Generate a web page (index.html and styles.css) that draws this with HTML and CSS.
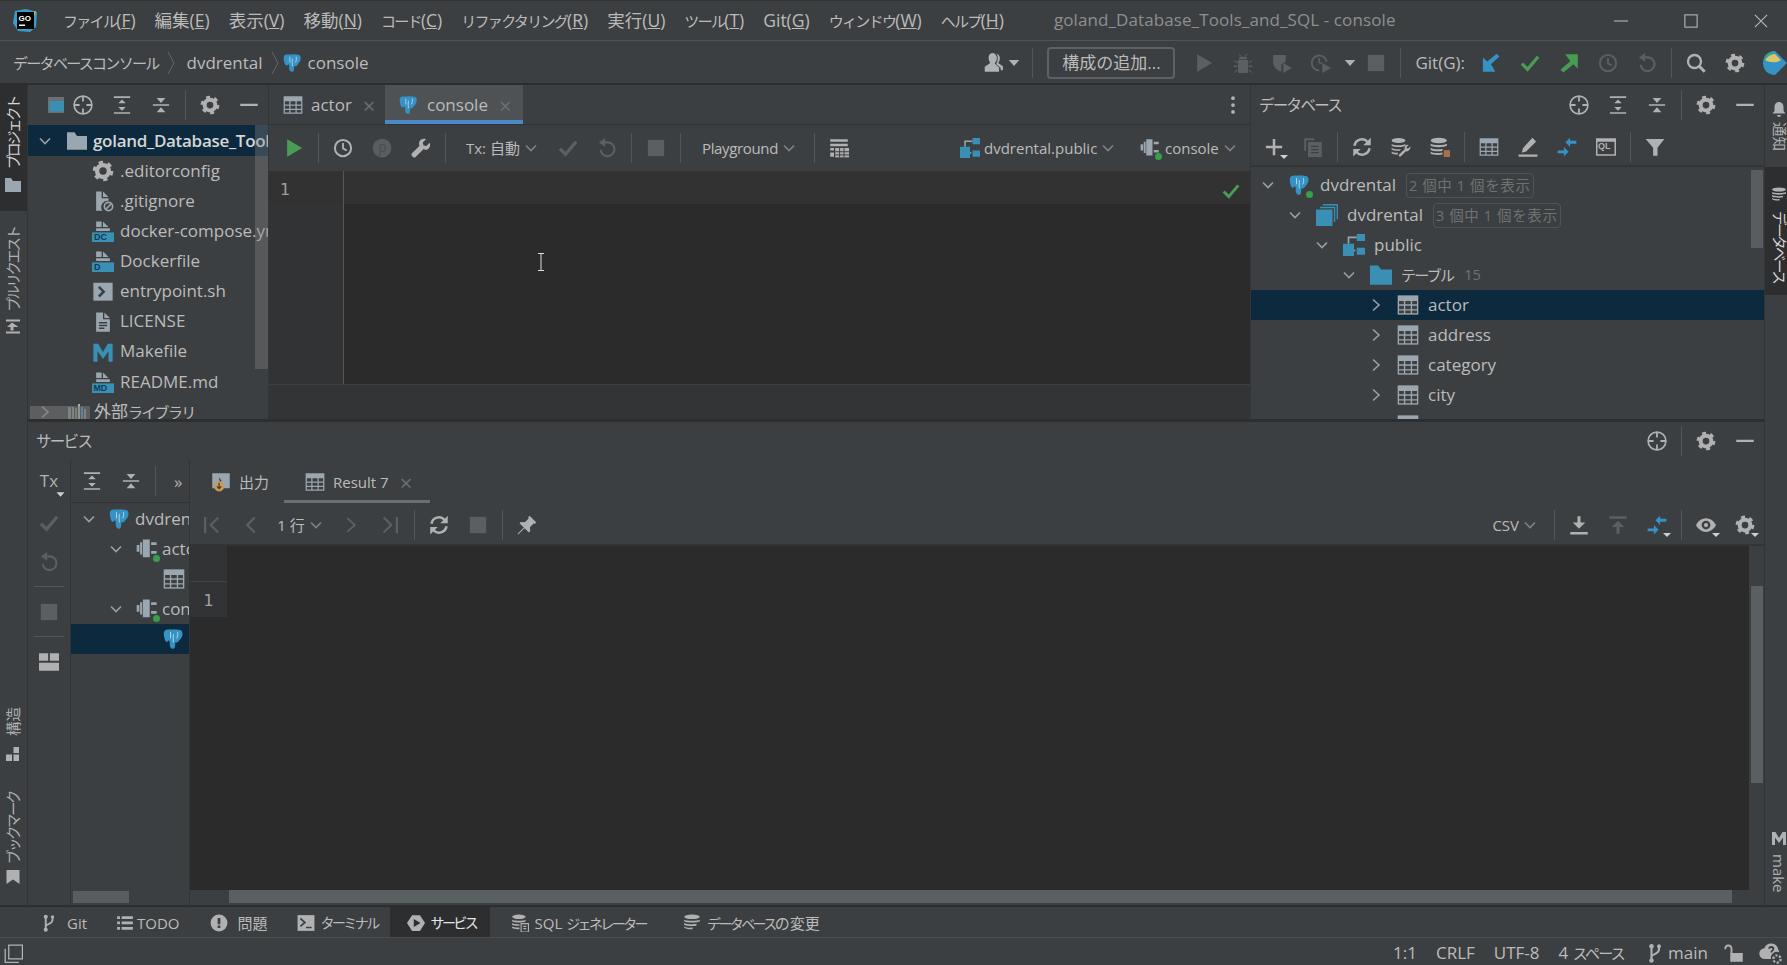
FILE: index.html
```html
<!DOCTYPE html>
<html lang="ja">
<head>
<meta charset="utf-8">
<title>goland_Database_Tools_and_SQL - console</title>
<link rel="stylesheet" href="styles.css">
</head>
<body>
<svg class="defs" xmlns="http://www.w3.org/2000/svg">
  <symbol id="pg" viewBox="0 0 16 16"><path fill="#3592c4" d="M2.600 1.200C1 1.400.3 2.900.6 5c.3 2.200 1.100 5 2.100 5 .6 0 1.100-.6 1.600-1.100.3.500.6.900.6 1.700 0 1.500-.1 2.500.6 3.500.8 1.100 2.400 1.300 3 .2.500-.9.300-2.600.4-3.700.9.100 1.800 0 2.300-.7.700-1.200 2.800-2.500 3-5.300.1-1.800-.6-3.300-2.300-3.200-.8-.3-1.800-.5-2.700-.2-.7-.3-1.300-.3-2 0C6.300 1.200 4 1 2.600 1.200z"/><path fill="none" stroke="#cfe4f0" stroke-width=".6" d="M5.500 3v4.500M10.500 3c.4 1.500.2 3-.5 4.500M7.600 4.500c-.3 2-.3 4.500 0 6"/></symbol>
  <symbol id="table" viewBox="0 0 16 16"><rect x="0.500" y="1" width="15" height="14" fill="#9aa7b0"/><path fill="#3c3f41" d="M1.500 5h3.500v2.500H1.500zM6 5h4v2.500H6zM11 5h3.500v2.500H11zM1.500 8.500h3.500V11H1.500zM6 8.500h4V11H6zM11 8.500h3.500V11H11zM1.500 12h3.500v2H1.500zM6 12h4v2H6zM11 12h3.500v2H11z"/></symbol>
  <symbol id="target" viewBox="0.700 0.700 14.600 14.600"><circle cx="8" cy="8" r="6.500" fill="none" stroke="currentColor" stroke-width="1.200"/><path stroke="currentColor" stroke-width="1.300" d="M8 1.500v4M8 10.500v4M1.500 8h4M10.500 8h4"/></symbol>
  <symbol id="expand" viewBox="0 0 16 16"><path fill="currentColor" d="M1.500 1h13v1.300h-13zM1.500 13.700h13V15h-13zM8 3.500l3 3H5zM8 12.500l-3-3h6z"/></symbol>
  <symbol id="collapse" viewBox="0 0 16 16"><path fill="currentColor" d="M1.500 7.300h13v1.300h-13zM8 6.300l-3.500-4h7zM8 9.700l3.500 4h-7z"/></symbol>
  <symbol id="gear" viewBox="0 0 16 16"><circle cx="8" cy="8" r="4.300" fill="none" stroke="currentColor" stroke-width="3.200"/><circle cx="8" cy="8" r="6.300" fill="none" stroke="currentColor" stroke-width="2.400" stroke-dasharray="3.100 3.500"/></symbol>
  <symbol id="minus" viewBox="0 0 16 16"><rect x="1" y="7" width="14" height="1.800" fill="currentColor"/></symbol>
  <symbol id="clock" viewBox="0 0 16 16"><circle cx="8" cy="8" r="6.500" fill="none" stroke="currentColor" stroke-width="1.600"/><path fill="none" stroke="currentColor" stroke-width="1.500" d="M8 4v4.300l3 1.700"/></symbol>
  <symbol id="play" viewBox="0 0 16 16"><path fill="currentColor" d="M2.500 1l12 7-12 7z"/></symbol>
  <symbol id="check" viewBox="0 0 16 16"><path fill="none" stroke="currentColor" stroke-width="2.600" d="M1.500 8.500l4.500 4.500 8.500-10"/></symbol>
  <symbol id="undo" viewBox="0 0 16 16"><path fill="none" stroke="currentColor" stroke-width="1.700" d="M4 3.500h4.500a5.500 5.500 0 1 1-5.500 6"/><path fill="currentColor" d="M6.500 0v7L1.500 3.500z"/></symbol>
  <symbol id="stop" viewBox="0 0 16 16"><rect x="1.500" y="1.500" width="13" height="13" fill="currentColor"/></symbol>
  <symbol id="wrench" viewBox="0 0 16 16"><path fill="currentColor" d="M15 3.800l-2.700 2.600-2.300-.5-.6-2.300L12 1c-2-.8-4.300-.1-5.200 1.600-.6 1.200-.5 2.500 0 3.500L.8 12.200c-.6.600-.6 1.500 0 2.100l.8.800c.6.600 1.500.6 2.100 0l6.200-6.100c1.100.5 2.400.5 3.500-.1C15 8 15.800 5.800 15 3.800z"/></symbol>
  <symbol id="down" viewBox="0 0 16 16"><path fill="none" stroke="currentColor" stroke-width="1.600" d="M3 5.500l5 5 5-5"/></symbol>
  <symbol id="right" viewBox="0 0 16 16"><path fill="none" stroke="currentColor" stroke-width="1.600" d="M5 2.500l6 5.500-6 5.500"/></symbol>
  <symbol id="left" viewBox="0 0 16 16"><path fill="none" stroke="currentColor" stroke-width="1.800" d="M11 2l-6 6 6 6"/></symbol>
  <symbol id="first" viewBox="0 0 16 16"><path fill="none" stroke="currentColor" stroke-width="1.800" d="M13 2L7 8l6 6M2.500 1.500v13"/></symbol>
  <symbol id="last" viewBox="0 0 16 16"><path fill="none" stroke="currentColor" stroke-width="1.800" d="M3 2l6 6-6 6M13.500 1.500v13"/></symbol>
  <symbol id="caret" viewBox="0 0 16 16"><path fill="currentColor" d="M1 4h14l-7 8z"/></symbol>
  <symbol id="schema" viewBox="0 0 16 16"><path fill="none" stroke="#9aa7b0" stroke-width="1.200" d="M4 7V2.500h6M9 12h-2"/><path fill="#3a8fb5" d="M10 0h6v5h-6zM0 7h8v9H0zM10 10h6v5h-6z"/></symbol>
  <symbol id="dbstack" viewBox="0 0 16 16"><path fill="none" stroke="#3a8fb5" stroke-width="1" d="M5 .5h10.500V11M3 2.500h10.500V13"/><rect x="0" y="4" width="12" height="12" fill="#3a8fb5"/></symbol>
  <symbol id="folder" viewBox="0 0 16 16"><path fill="#3a8fb5" d="M0 1h6l2 3h8v11H0z"/></symbol>
  <symbol id="gfolder" viewBox="0 0 16 16"><path fill="#9aa7b0" d="M0 1h6l2 3h8v11H0z"/></symbol>
  <symbol id="plug" viewBox="0 0 16 16"><path fill="#9aa7b0" d="M5 1h5v13H5zM3 3h1.500v9H3zM.5 5h2v5h-2zM11 3h4v2h-4zM11 9.500h4v2h-4z"/></symbol>
  <symbol id="dot" viewBox="0 0 4 4"><circle cx="2" cy="2" r="2" fill="#389e4a"/></symbol>
  <symbol id="doc" viewBox="0 0 16 16"><path fill="#9aa7b0" d="M3 1h5v5h5v9H3zM9 1l4 4H9z"/><path stroke="#3c3f41" d="M5 8.500h6M5 10.500h6M5 12.500h4"/></symbol>
  <symbol id="docblank" viewBox="0 0 16 16"><path fill="#9aa7b0" d="M3 1h4v4H3zM8 1l4 4H8zM3 6h10v2H3z"/><rect y="9" width="16" height="7" fill="#3a8fb5"/></symbol>
  <symbol id="nogit" viewBox="0 0 16 16"><path fill="#9aa7b0" d="M3 1h4v5h5v2a4.500 4.500 0 0 0-4.500 7H3zM8 1l4 4H8z"/><circle cx="12" cy="12" r="3" fill="none" stroke="#9aa7b0" stroke-width="1.200"/><path stroke="#9aa7b0" stroke-width="1.100" d="M14 10l-4 4"/></symbol>
  <symbol id="shell" viewBox="0 0 16 16"><rect x="1" y="2" width="14" height="13" fill="#9aa7b0"/><path fill="none" stroke="#3c3f41" stroke-width="1.800" d="M5 5l3.500 3.500L5 12"/></symbol>
  <symbol id="make" viewBox="0 0 16 16"><path fill="currentColor" d="M1 2h3.500L8 8l3.500-6H15v13h-3V7.500L8 13 4 7.500V15H1z"/></symbol>
  <symbol id="user" viewBox="0 0 20 20"><path fill="currentColor" d="M9.500 1C7 1 6 3 6 5.500S7 9 7.500 10l-5 3.500V18h13v-4l-4-3.500c1-1 2-3 2-5S12 1 9.500 1z"/><path fill="currentColor" d="M13 1.500c2 .3 3.200 1.800 3.200 4s-.7 3.500-1.500 4.500L19 13v3.500h-2v-2l-4.200-3.500c1-1.500 1.500-3.500 1.500-5.500s-.5-3-1.300-4.500z"/></symbol>
  <symbol id="bug" viewBox="0 0 16 16"><path fill="currentColor" d="M5 3h6v2H5zM4 5.500h8V14a3 3 0 0 1-8 0zM1 6l2.500 1v1L1 7zM15 6l-2.500 1v1L15 7zM.5 10h3v1.200h-3zM12.500 10h3v1.200h-3zM1 15l2.500-2v1L1.500 16zM15 15l-2.500-2v1l2 2zM5 .5l2 2H6L4.500 1zM11 .5L9 2.500h1L11.500 1z"/></symbol>
  <symbol id="shieldrun" viewBox="0 0 16 16"><path fill="currentColor" d="M1 1.500h10v5L7.500 9v6C3 13.500 1 11 1 7z"/><path fill="currentColor" d="M9 8l7 4-7 4z"/></symbol>
  <symbol id="clockrun" viewBox="0 0 16 16"><path fill="none" stroke="currentColor" stroke-width="1.500" d="M6.500 14A6 6 0 1 1 12.500 7"/><path fill="none" stroke="currentColor" stroke-width="1.300" d="M6.500 4v3.500l2 1"/><path fill="currentColor" d="M9 8l7 4-7 4z"/></symbol>
  <symbol id="arrowin" viewBox="0 0 16 16"><path fill="#3592c4" d="M1.500 15V3.500l3.500 3.200L12.500.5l2.200 2.300L8 9l3.500 6z"/></symbol>
  <symbol id="arrowout" viewBox="0 0 16 16"><path fill="#499c54" d="M15 1v11.500L11.500 9 3.500 15.500 1.200 13.300 9 6.500 5 1z"/></symbol>
  <symbol id="search" viewBox="0 0 16 16"><circle cx="6.800" cy="6.800" r="5.200" fill="none" stroke="currentColor" stroke-width="1.900"/><path stroke="currentColor" stroke-width="2.300" d="M10.500 10.500l4.500 4.500"/></symbol>
  <symbol id="plus" viewBox="0 0 16 16"><path fill="currentColor" d="M7 1.500h2V7h5.500v2H9v5.500H7V9H1.500V7H7z"/></symbol>
  <symbol id="copy" viewBox="0 0 16 16"><path fill="currentColor" d="M1 1h8v1.500H2.500V11H1z"/><path fill="currentColor" d="M4 4h11v12H4z"/><path stroke="#3c3f41" d="M6.500 7.500h6M6.500 10h6M6.500 12.500h6"/></symbol>
  <symbol id="refresh" viewBox="0 0 16 16"><path fill="none" stroke="currentColor" stroke-width="2" d="M2 7a6 6 0 0 1 10.500-3M14 9a6 6 0 0 1-10.500 3"/><path fill="currentColor" d="M15 .5V6.500H9zM1 15.500V9.500H7z"/></symbol>
  <symbol id="dbtools" viewBox="0 0 16 16"><ellipse cx="6" cy="2.800" rx="5.500" ry="2" fill="currentColor"/><path fill="currentColor" d="M.5 5.500c1.500 1.400 9.500 1.400 11 0v1.500c-1.500 1.400-9.500 1.400-11 0zM.5 8.500C2 10 7 10 8 9.500L7 11c-3 .3-5.500-.2-6.500-1zM.5 11.500c1 .8 3 1.200 5 1V14c-2 .1-4-.2-5-1z"/><path fill="currentColor" d="M15.500 7.500l-2 1.800-1.200-1.200 1.800-1.800c-1.500-.5-3 .4-3.200 2 0 .5 0 1 .2 1.300L6.500 14c-.5.500-.4 1 0 1.400s1 .4 1.400 0l4-4c1.800.6 4.200-1.500 3.600-3.900z"/></symbol>
  <symbol id="db" viewBox="0 0 16 16"><ellipse cx="7" cy="2.800" rx="6.500" ry="2.200" fill="currentColor"/><path fill="currentColor" d="M.5 5.300c1.500 1.500 11.500 1.500 13 0V7c-1.500 1.500-11.500 1.500-13 0zM.5 8.500c1.500 1.500 8 1.500 9.500.8V11c-2 .8-8 .5-9.500-.8zM.5 11.500c1.500 1.400 6 1.500 9.500.8V14c-3 .6-8 .5-9.500-.8z"/><rect x="11" y="10.500" width="5.500" height="5.500" fill="#a8704a"/></symbol>
  <symbol id="pen" viewBox="0 0 16 16"><path fill="currentColor" d="M11.500.5l3 3L6.500 11.500 3 12.500l1-3.500zM.5 14h15v1.800H.5z"/></symbol>
  <symbol id="sync" viewBox="0 0 16 16"><path fill="#3592c4" d="M15.500 3H10.500V.5L6.800 4.200 10.500 8V5.300h5zM.5 13H5.500v2.500L9.200 11.800 5.500 8v2.700h-5z"/></symbol>
  <symbol id="ql" viewBox="0 0 16 16"><path fill="currentColor" d="M0 1h16v14H0z"/><path fill="#3c3f41" d="M1.200 3.800h13.600v10H1.200z"/></symbol>
  <symbol id="filter" viewBox="0 0 16 16"><path fill="currentColor" d="M.5 1.500h15L10 8.500V15H6.500V8.500z"/></symbol>
  <symbol id="pin" viewBox="0 0 16 16"><path fill="currentColor" d="M10 .5L15.500 6l-1.200 1-1-.3-3 3 .3 3.300-1 1L6 10.500 1 15.500l-.5-.5L5.500 10 2 6.500l1-1 3.300.3 3-3L9 1.800z"/></symbol>
  <symbol id="dl" viewBox="0 0 16 16"><path fill="currentColor" d="M6.800 1h2.400v5H13l-5 5-5-5h3.800zM1 13.500h14V15.500H1z"/></symbol>
  <symbol id="ul" viewBox="0 0 16 16"><path fill="currentColor" d="M1 1h14v2H1zM8 4.500l5 5H9.200V15H6.800V9.500H3z"/></symbol>
  <symbol id="eye" viewBox="0 0 16 16"><path fill="currentColor" fill-rule="evenodd" d="M8 2.500C4 2.500 1.200 5.500 0 8c1.200 2.500 4 5.500 8 5.500s6.800-3 8-5.500c-1.200-2.500-4-5.500-8-5.500zM8 4.500a3.500 3.500 0 1 1 0 7 3.500 3.500 0 0 1 0-7z"/><circle cx="8" cy="8" r="1.700" fill="currentColor"/></symbol>
  <symbol id="layout" viewBox="0 0 16 16"><path fill="currentColor" d="M0 1h7.300v6H0zM8.700 1H16v6H8.700zM0 8.500h16V15H0z"/></symbol>
  <symbol id="grid" viewBox="0 0 16 16"><path fill="currentColor" d="M1 1h14v2H1zM1 4.500h14v2H1zM1 8h3v2H1zM1 11.500h3V15H1z"/><path fill="currentColor" d="M5 8h11v7.500H5z"/><path stroke="#3c3f41" stroke-width=".8" d="M5 11h11M5 13.500h11M8.500 8v7.500M12 8v7.500"/></symbol>
  <symbol id="selin" viewBox="0 0 16 16"><rect x="0" y="0" width="16" height="16" fill="#6c7072"/><rect x="1.500" y="4" width="14.500" height="10.500" fill="#3a8fb5"/></symbol>
  <symbol id="branch" viewBox="0 0 16 16"><path fill="none" stroke="currentColor" stroke-width="1.700" d="M6 3v11M6 11c0-2 6-2 6-6V3"/><circle cx="6" cy="2.500" r="1.800" fill="currentColor"/><circle cx="6" cy="14" r="1.800" fill="currentColor"/><circle cx="12" cy="2.500" r="1.500" fill="currentColor"/></symbol>
  <symbol id="list" viewBox="0 0 16 16"><path fill="currentColor" d="M1 2h2.500v2.500H1zM5 2h10v2.500H5zM1 6.700h2.500v2.500H1zM5 6.700h10v2.500H5zM1 11.500h2.500V14H1zM5 11.500h10V14H5z"/></symbol>
  <symbol id="warn" viewBox="0 0 16 16"><circle cx="8" cy="8" r="7.500" fill="currentColor"/><path fill="#3c3f41" d="M6.800 3.500h2.400v5.500H6.800zM6.800 10.200h2.400v2.300H6.800z"/></symbol>
  <symbol id="term" viewBox="0 0 16 16"><rect x="0.500" y="1" width="15" height="14" fill="currentColor"/><path fill="none" stroke="#3c3f41" stroke-width="1.500" d="M3 4l4 3.500L3 11M8 12h5"/></symbol>
  <symbol id="svc" viewBox="0 0 16 16"><path fill="currentColor" d="M4.500 1h7L16 8l-4.500 7h-7L0 8z"/><path fill="#2d2e30" d="M6 4.500L12 8l-6 3.500z"/></symbol>
  <symbol id="sqlgen" viewBox="0 0 16 16"><ellipse cx="7" cy="2.500" rx="6" ry="2" fill="currentColor"/><path fill="currentColor" d="M1 5c1.500 1.300 10.500 1.300 12 0v1.500C11.500 8 2.500 8 1 6.500zM1 8c1 .9 4 1.200 6.500 1v1.500C5 10.700 2 10.300 1 9.500zM1 11c1 .8 4 1.200 6.500 1v1.500C5 13.700 2 13.300 1 12.500z"/><path fill="none" stroke="currentColor" d="M9 8.500h6.500V16H9zM11 11h2.500M11 13h2.500"/></symbol>
  <symbol id="dbchg" viewBox="0 0 16 16"><ellipse cx="8" cy="2.500" rx="7" ry="2" fill="currentColor"/><path fill="currentColor" d="M1 5c1.500 1.300 12.500 1.300 14 0v1.500C13.500 8 2.500 8 1 6.500zM1 8c1.500 1.300 9 1.400 11 .7v1.500C10 11 2.500 10.800 1 9.500zM1 11c1 .9 5 1.400 7.500 1v1.500C6 13.800 2 13.300 1 12z"/></symbol>
  <symbol id="outp" viewBox="0 0 16 16"><rect x="1" y="1" width="14" height="12" fill="#9aa7b0"/><path fill="#3c3f41" d="M6 4l2.500 3-1.300 1z"/><circle cx="6.500" cy="11.500" r="4" fill="#c99a52"/><path stroke="#3c3f41" fill="none" d="M6.500 8.500V13M4.700 11.500l1.800 1.800 1.800-1.800"/></symbol>
  <symbol id="bell" viewBox="0 0 16 16"><path fill="currentColor" d="M8 1c3 0 4.500 2.500 4.500 5v4l2 2.500h-13l2-2.500V6C3.500 3.500 5 1 8 1zM6 14h4a2 2 0 0 1-4 0z"/></symbol>
  <symbol id="pullreq" viewBox="0 0 16 16"><path fill="currentColor" d="M1 1h14v2H1zM1 13h14v2H1zM7 4L2 8.500h3.500V12h3V8.500h5z"/></symbol>
  <symbol id="struct" viewBox="0 0 16 16"><path fill="currentColor" d="M8.500 1H14v6H8.500zM1 8.500h6V15H1zM8.500 8.500H14V15H8.500z"/></symbol>
  <symbol id="bookmark" viewBox="0 0 16 16"><path fill="currentColor" d="M1.500 1h13v14L8 10.500 1.500 15z"/></symbol>
  <symbol id="lock" viewBox="0 0 16 16"><path fill="none" stroke="currentColor" stroke-width="1.500" d="M1 5c0-4 5-4 5 0v3"/><rect x="5" y="8" width="10" height="7" fill="currentColor"/></symbol>
  <symbol id="inspect" viewBox="0 0 20 20"><path fill="currentColor" d="M5 15a4.500 4.500 0 0 1-.5-9A6 6 0 0 1 16 7a4 4 0 0 1 1 2.500A5 5 0 0 0 10 15z"/><path fill="none" stroke="#3c3f41" stroke-width="1.500" d="M8.500 6.500c0-2 3.500-2 3.500 0 0 1.500-1.800 1.500-1.800 3"/><circle cx="15" cy="15" r="3" fill="none" stroke="currentColor" stroke-width="2" stroke-dasharray="1.800 1.300"/></symbol>
  <symbol id="frame" viewBox="0 0 16 16"><path fill="none" stroke="currentColor" stroke-width="1.100" d="M4 1h11.500v11.500H4zM1 4v11.500h11.500"/></symbol>
</svg>

<div class="app">
  <header class="titlebar">
    <svg class="logo" viewBox="0 0 26 24"><path fill="#3a9cc9" d="M3 2L14 0l11 3-1 15-6 5-12-1-5-8z"/><path fill="#b5d33d" d="M21 3l3-1-2 5z"/><rect x="5" y="3" width="17" height="17" fill="#000"/><text x="6.500" y="12" class="logotext">GO</text><rect x="7" y="15.500" width="6" height="1.500" fill="#fff"/></svg>
    <nav class="menu">
      <span><span class="k">ファイル</span>(<u>F</u>)</span>
      <span>編集(<u>E</u>)</span>
      <span>表示(<u>V</u>)</span>
      <span>移動(<u>N</u>)</span>
      <span><span class="k">コード</span>(<u>C</u>)</span>
      <span><span class="k">リファクタリング</span>(<u>R</u>)</span>
      <span>実行(<u>U</u>)</span>
      <span><span class="k">ツール</span>(<u>T</u>)</span>
      <span>Git(<u>G</u>)</span>
      <span><span class="k">ウィンドウ</span>(<u>W</u>)</span>
      <span><span class="k">ヘルプ</span>(<u>H</u>)</span>
    </nav>
    <div class="wintitle">goland_Database_Tools_and_SQL - console</div>
    <div class="winbtns">
      <svg class="wb" viewBox="0 0 16 16"><path stroke="#bbb" stroke-width="1.200" d="M0 8h16"/></svg>
      <svg class="wb" viewBox="0 0 16 16"><rect x="1" y="1" width="14" height="14" fill="none" stroke="#bbb" stroke-width="1.200"/></svg>
      <svg class="wb" viewBox="0 0 16 16"><path stroke="#bbb" stroke-width="1.200" d="M1 1l14 14M15 1L1 15"/></svg>
    </div>
  </header>

  <div class="navbar">
    <div class="crumbs">
      <span><span class="k">データベースコンソール</span></span>
      <svg class="crumbsep" viewBox="0 0 8 24"><path fill="none" stroke="#666" d="M1 1l6 11-6 11"/></svg>
      <span>dvdrental</span>
      <svg class="crumbsep" viewBox="0 0 8 24"><path fill="none" stroke="#666" d="M1 1l6 11-6 11"/></svg>
      <svg class="ic"><use href="#pg"/></svg>
      <span>console</span>
    </div>
    <div class="navtools">
      <svg class="ic user"><use href="#user"/></svg>
      <svg class="ic tiny"><use href="#caret"/></svg>
      <i class="sep first"></i>
      <button class="cfg">構成の追加...</button>
      <span class="btn dim"><svg class="ic"><use href="#play"/></svg></span>
      <span class="btn dim"><svg class="ic"><use href="#bug"/></svg></span>
      <span class="btn dim"><svg class="ic"><use href="#shieldrun"/></svg></span>
      <span class="btn dim"><svg class="ic"><use href="#clockrun"/></svg></span>
      <svg class="ic tiny"><use href="#caret"/></svg>
      <span class="btn dim narrow"><svg class="ic"><use href="#stop"/></svg></span>
      <i class="sep"></i>
      <span class="gitlabel">Git(G):</span>
      <span class="btn"><svg class="ic"><use href="#arrowin"/></svg></span>
      <span class="btn green"><svg class="ic"><use href="#check"/></svg></span>
      <span class="btn"><svg class="ic"><use href="#arrowout"/></svg></span>
      <span class="btn dim"><svg class="ic"><use href="#clock"/></svg></span>
      <span class="btn dim"><svg class="ic"><use href="#undo"/></svg></span>
      <i class="sep"></i>
      <span class="btn"><svg class="ic"><use href="#search"/></svg></span>
      <span class="btn"><svg class="ic"><use href="#gear"/></svg></span>
      <svg class="toolbox" viewBox="0 0 24 26"><path fill="#3592c4" d="M0 13C0 6 5 1 12 1l12 12-12 12C5 25 0 20 0 13z"/><path fill="#d8c66d" d="M2 10c2-4 6-6 10-6l6 6c-4 3-11 3-16 0z"/><path fill="#37a58c" d="M2 6c3-3 6-4 10-5l-2 3C7 5 4 7 2 10z"/></svg>
    </div>
  </div>

  <div class="main">
    <aside class="stripe left">
      <div class="sitem active proj"><svg class="sic"><use href="#gfolder"/></svg><span class="stext">プロジェクト</span></div>
      <div class="sitem pr"><svg class="sic"><use href="#pullreq"/></svg><span class="stext">プルリクエスト</span></div>
      <div class="sitem struct"><svg class="sic"><use href="#struct"/></svg><span class="stext kanji">構造</span></div>
      <div class="sitem marks"><svg class="sic"><use href="#bookmark"/></svg><span class="stext">ブックマーク</span></div>
    </aside>

    <div class="center">
      <div class="top">
        <section class="project">
          <div class="phead">
            <span class="selin"><svg class="ic"><use href="#selin"/></svg></span>
            <span class="btn"><svg class="ic"><use href="#target"/></svg></span>
            <span class="btn"><svg class="ic"><use href="#expand"/></svg></span>
            <span class="btn"><svg class="ic"><use href="#collapse"/></svg></span>
            <i class="sep"></i>
            <span class="btn"><svg class="ic"><use href="#gear"/></svg></span>
            <span class="btn"><svg class="ic"><use href="#minus"/></svg></span>
          </div>
          <div class="ptree">
            <div class="frow sel"><svg class="chev"><use href="#down"/></svg><svg class="ic fold"><use href="#gfolder"/></svg><b>goland_Database_Tools_and_SQL</b></div>
            <div class="frow file"><svg class="ic gear"><use href="#gear"/></svg><span>.editorconfig</span></div>
            <div class="frow file"><svg class="ic"><use href="#nogit"/></svg><span>.gitignore</span></div>
            <div class="frow file"><svg class="ic" viewBox="0 0 16 16"><use href="#docblank"/><text x="1.500" y="14.800" class="badgetext">DC</text></svg><span>docker-compose.yml</span></div>
            <div class="frow file"><svg class="ic" viewBox="0 0 16 16"><use href="#docblank"/><text x="1.500" y="14.800" class="badgetext">D</text></svg><span>Dockerfile</span></div>
            <div class="frow file"><svg class="ic"><use href="#shell"/></svg><span>entrypoint.sh</span></div>
            <div class="frow file"><svg class="ic"><use href="#doc"/></svg><span>LICENSE</span></div>
            <div class="frow file"><svg class="ic teal"><use href="#make"/></svg><span>Makefile</span></div>
            <div class="frow file"><svg class="ic" viewBox="0 0 16 16"><use href="#docblank"/><text x="1" y="14.800" class="badgetext">MD</text></svg><span>README.md</span></div>
            <div class="frow ext"><svg class="chev"><use href="#right"/></svg>
              <svg class="ic fold" viewBox="0 0 20 20"><path fill="#8a8d8f" d="M1 5h3v13H1zM5 5h2v13H5z"/><path fill="#6a9a5a" d="M8 6h2v12H8z"/><path fill="#aab0b5" d="M11 2h2v16h-2z"/><path fill="#3592c4" d="M14 5h2v13h-2z"/><path fill="#8a8d8f" d="M17 7h2v11h-2z"/></svg>
              <span>外部<span class="k">ライブラリ</span></span></div>
          </div>
          <i class="vthumb pthumb"></i>
          <i class="hthumb"></i>
        </section>

        <section class="editor">
          <div class="tabs">
            <div class="tab"><svg class="ic"><use href="#table"/></svg><span>actor</span><em>×</em></div>
            <div class="tab on"><svg class="ic"><use href="#pg"/></svg><span>console</span><em>×</em></div>
            <svg class="ic dots" viewBox="0 0 16 16"><circle cx="8" cy="2.500" r="1.500" fill="#afb1b3"/><circle cx="8" cy="8" r="1.500" fill="#afb1b3"/><circle cx="8" cy="13.500" r="1.500" fill="#afb1b3"/></svg>
          </div>
          <div class="etool">
            <span class="btn green"><svg class="ic"><use href="#play"/></svg></span>
            <i class="sep"></i>
            <span class="btn"><svg class="ic"><use href="#clock"/></svg></span>
            <span class="btn"><svg class="ic pcirc" viewBox="0 0 16 16"><circle cx="8" cy="8" r="7.500" fill="#5a5d5f"/><text x="5" y="11" class="ptext">p</text></svg></span>
            <span class="btn"><svg class="ic"><use href="#wrench"/></svg></span>
            <i class="sep"></i>
            <span class="combo tx">Tx: 自動<svg class="chv"><use href="#down"/></svg></span>
            <span class="btn dim"><svg class="ic"><use href="#check"/></svg></span>
            <span class="btn dim"><svg class="ic"><use href="#undo"/></svg></span>
            <i class="sep"></i>
            <span class="btn dim"><svg class="ic"><use href="#stop"/></svg></span>
            <i class="sep"></i>
            <span class="combo play">Playground<svg class="chv"><use href="#down"/></svg></span>
            <i class="sep"></i>
            <span class="btn"><svg class="ic"><use href="#grid"/></svg></span>
            <span class="combo schema"><svg class="ic"><use href="#schema"/></svg>dvdrental.public<svg class="chv"><use href="#down"/></svg></span>
            <span class="combo cons"><span class="plug"><svg class="ic"><use href="#plug"/></svg><svg class="gdot"><use href="#dot"/></svg></span>console<svg class="chv"><use href="#down"/></svg></span>
          </div>
          <div class="ebody">
            <div class="gutter"><div class="gline">1</div></div>
            <div class="code"><div class="caretrow"><svg class="ic okmark"><use href="#check"/></svg></div></div>
          </div>
          <div class="eband"></div>
          <svg class="ibeam" viewBox="0 0 8 18"><path fill="none" stroke="#ddd" d="M1 .5h6M4 .5v17M1 17.500h6"/></svg>
        </section>

        <section class="dbpanel">
          <div class="dhead">
            <span class="ptitle"><span class="k">データベース</span></span>
            <span class="right">
              <span class="btn"><svg class="ic"><use href="#target"/></svg></span>
              <span class="btn"><svg class="ic"><use href="#expand"/></svg></span>
              <span class="btn"><svg class="ic"><use href="#collapse"/></svg></span>
              <i class="sep"></i>
              <span class="btn"><svg class="ic"><use href="#gear"/></svg></span>
              <span class="btn"><svg class="ic"><use href="#minus"/></svg></span>
            </span>
          </div>
          <div class="dtool">
            <span class="btn corner"><svg class="ic"><use href="#plus"/></svg></span>
            <span class="btn dim"><svg class="ic"><use href="#copy"/></svg></span>
            <i class="sep"></i>
            <span class="btn"><svg class="ic"><use href="#refresh"/></svg></span>
            <span class="btn"><svg class="ic"><use href="#dbtools"/></svg></span>
            <span class="btn"><svg class="ic"><use href="#db"/></svg></span>
            <i class="sep"></i>
            <span class="btn"><svg class="ic"><use href="#table"/></svg></span>
            <span class="btn"><svg class="ic"><use href="#pen"/></svg></span>
            <span class="btn"><svg class="ic"><use href="#sync"/></svg></span>
            <span class="btn qlbtn"><svg class="ic"><use href="#ql"/></svg><span class="qltext">QL</span></span>
            <i class="sep"></i>
            <span class="btn"><svg class="ic"><use href="#filter"/></svg></span>
          </div>
          <div class="dtree">
            <div class="trow d0"><svg class="chev"><use href="#down"/></svg><span class="tic"><svg class="ic"><use href="#pg"/></svg><svg class="gdot"><use href="#dot"/></svg></span><span>dvdrental</span><span class="badge">2 個中 1 個を表示</span></div>
            <div class="trow d1"><svg class="chev"><use href="#down"/></svg><span class="tic"><svg class="ic"><use href="#dbstack"/></svg></span><span>dvdrental</span><span class="badge">3 個中 1 個を表示</span></div>
            <div class="trow d2"><svg class="chev"><use href="#down"/></svg><span class="tic"><svg class="ic"><use href="#schema"/></svg></span><span>public</span></div>
            <div class="trow d3"><svg class="chev"><use href="#down"/></svg><span class="tic"><svg class="ic"><use href="#folder"/></svg></span><span><span class="k">テーブル</span></span><span class="count">15</span></div>
            <div class="trow d4 sel"><svg class="chev"><use href="#right"/></svg><span class="tic"><svg class="ic"><use href="#table"/></svg></span><span>actor</span></div>
            <div class="trow d4"><svg class="chev"><use href="#right"/></svg><span class="tic"><svg class="ic"><use href="#table"/></svg></span><span>address</span></div>
            <div class="trow d4"><svg class="chev"><use href="#right"/></svg><span class="tic"><svg class="ic"><use href="#table"/></svg></span><span>category</span></div>
            <div class="trow d4"><svg class="chev"><use href="#right"/></svg><span class="tic"><svg class="ic"><use href="#table"/></svg></span><span>city</span></div>
            <div class="trow d4"><svg class="chev"><use href="#right"/></svg><span class="tic"><svg class="ic"><use href="#table"/></svg></span></div>
          </div>
          <i class="vthumb dthumb"></i>
        </section>
      </div>

      <section class="services">
        <div class="shead">
          <span class="ptitle"><span class="k">サービス</span></span>
          <span class="right">
            <span class="btn"><svg class="ic"><use href="#target"/></svg></span>
            <i class="sep"></i>
            <span class="btn"><svg class="ic"><use href="#gear"/></svg></span>
            <span class="btn"><svg class="ic"><use href="#minus"/></svg></span>
          </span>
        </div>
        <div class="sbody">
          <div class="stool">
            <span class="vbtn txb">Tx<svg class="tc"><use href="#caret"/></svg></span>
            <span class="vbtn dim"><svg class="ic"><use href="#check"/></svg></span>
            <span class="vbtn dim"><svg class="ic"><use href="#undo"/></svg></span>
            <i class="hsep"></i>
            <span class="vbtn dim"><svg class="ic"><use href="#stop"/></svg></span>
            <i class="hsep"></i>
            <span class="vbtn"><svg class="ic"><use href="#layout"/></svg></span>
          </div>
          <div class="stree">
            <div class="sttool">
              <span class="btn"><svg class="ic"><use href="#expand"/></svg></span>
              <span class="btn"><svg class="ic"><use href="#collapse"/></svg></span>
              <i class="sep"></i>
              <span class="more">»</span>
            </div>
            <div class="sttree">
              <div class="trow d0"><svg class="chev"><use href="#down"/></svg><span class="tic"><svg class="ic"><use href="#pg"/></svg></span><span class="tight">dvdrental</span></div>
              <div class="trow d1"><svg class="chev"><use href="#down"/></svg><span class="tic"><svg class="ic"><use href="#plug"/></svg><svg class="gdot"><use href="#dot"/></svg></span><span class="tight">actor</span></div>
              <div class="trow d2 leaf"><svg class="chev none"></svg><span class="tic"><svg class="ic"><use href="#table"/></svg></span></div>
              <div class="trow d1"><svg class="chev"><use href="#down"/></svg><span class="tic"><svg class="ic"><use href="#plug"/></svg><svg class="gdot"><use href="#dot"/></svg></span><span class="tight">console</span></div>
              <div class="trow d2 leaf sel"><svg class="chev none"></svg><span class="tic"><svg class="ic"><use href="#pg"/></svg></span></div>
            </div>
            <i class="treescroll"></i>
          </div>
          <div class="results">
            <div class="rtabs">
              <div class="rtab"><svg class="ic"><use href="#outp"/></svg><span>出力</span></div>
              <div class="rtab on"><svg class="ic"><use href="#table"/></svg><span>Result 7</span><em>×</em></div>
            </div>
            <div class="rtool">
              <span class="btn dim"><svg class="ic"><use href="#first"/></svg></span>
              <span class="btn dim"><svg class="ic"><use href="#left"/></svg></span>
              <span class="combo rows">1 行<svg class="chv"><use href="#down"/></svg></span>
              <span class="btn dim"><svg class="ic"><use href="#right"/></svg></span>
              <span class="btn dim"><svg class="ic"><use href="#last"/></svg></span>
              <i class="sep"></i>
              <span class="btn"><svg class="ic"><use href="#refresh"/></svg></span>
              <span class="btn dim"><svg class="ic"><use href="#stop"/></svg></span>
              <i class="sep"></i>
              <span class="btn"><svg class="ic"><use href="#pin"/></svg></span>
              <span class="right">
                <span class="combo csv">CSV<svg class="chv"><use href="#down"/></svg></span>
                <i class="sep"></i>
                <span class="btn"><svg class="ic"><use href="#dl"/></svg></span>
                <span class="btn dim"><svg class="ic"><use href="#ul"/></svg></span>
                <span class="btn corner"><svg class="ic"><use href="#sync"/></svg></span>
                <i class="sep"></i>
                <span class="btn corner"><svg class="ic"><use href="#eye"/></svg></span>
                <span class="btn corner"><svg class="ic"><use href="#gear"/></svg></span>
              </span>
            </div>
            <div class="gridwrap">
              <div class="gridarea">
                <div class="rowhead"><div class="rh0"></div><div class="rh1">1</div></div>
                <div class="vtrack"><i class="vthumb2"></i></div>
              </div>
              <div class="htrack"><i class="hthumb2"></i></div>
            </div>
          </div>
        </div>
      </section>
    </div>

    <aside class="stripe right">
      <div class="sitem notif"><svg class="sic"><use href="#bell"/></svg><span class="stext kanji">通知</span></div>
      <div class="sitem active dbs"><svg class="sic"><use href="#dbchg"/></svg><span class="stext">データベース</span></div>
      <div class="sitem mk"><svg class="sic"><use href="#make"/></svg><span class="stext kanji">make</span></div>
    </aside>
  </div>

  <div class="toolbar">
    <div class="tw"><svg class="ic"><use href="#branch"/></svg>Git</div>
    <div class="tw"><svg class="ic"><use href="#list"/></svg>TODO</div>
    <div class="tw"><svg class="ic"><use href="#warn"/></svg>問題</div>
    <div class="tw"><svg class="ic"><use href="#term"/></svg><span class="k">ターミナル</span></div>
    <div class="tw on"><svg class="ic"><use href="#svc"/></svg><span class="k">サービス</span></div>
    <div class="tw"><svg class="ic"><use href="#sqlgen"/></svg><span>SQL <span class="k">ジェネレーター</span></span></div>
    <div class="tw"><svg class="ic"><use href="#dbchg"/></svg><span><span class="k">データベース</span>の変更</span></div>
  </div>

  <footer class="status">
    <svg class="ic frame"><use href="#frame"/></svg>
    <div class="stat">
      <span>1:1</span><span>CRLF</span><span>UTF-8</span><span>4 <span class="k">スペース</span></span>
      <span class="gb"><svg class="ic"><use href="#branch"/></svg>main</span>
      <svg class="ic lockic"><use href="#lock"/></svg>
      <svg class="ic wide"><use href="#inspect"/></svg>
    </div>
  </footer>
</div>
</body>
</html>
```

FILE: styles.css
```css
* { box-sizing: border-box; }
html, body { margin: 0; height: 100%; background: #3c3f41; }
body { color: #bbbbbb; font: 17px/1.2 "Open Sans", "Noto Sans", "Noto Sans CJK JP", sans-serif; overflow: hidden; }
em { font-style: normal; }
.defs { display: none; }
.app { width: 1787px; height: 965px; display: flex; flex-direction: column; overflow: hidden; }
.k { font-size: 15px; letter-spacing: -1.700px; }
.ic { width: 20px; height: 20px; flex: none; color: #afb1b3; display: block; }
.tiny { width: 12px; height: 12px; }
.btn { width: 39px; height: 39px; display: flex; align-items: center; justify-content: center; flex: none; color: #afb1b3; position: relative; }
.btn .ic { color: inherit; }
.dim { color: #5c5f61; }
.green { color: #499c54; }
.sep { width: 1px; height: 30px; background: #515658; margin: 0 4.500px 0 4.500px; flex: none; display: block; }
.right { margin-left: auto; display: flex; align-items: center; }

/* title */
.titlebar { height: 41px; flex: none; display: flex; align-items: center; border-bottom: 1px solid #505355; border-top: 1px solid #333; }
.logo { width: 26px; height: 24px; margin-left: 12px; flex: none; }
.logotext { font: bold 8px "Liberation Sans", sans-serif; fill: #fff; }
.menu { display: flex; gap: 19px; margin-left: 25px; font-size: 17.500px; }
.wintitle { margin-left: 50px; color: #8c8f91; font-size: 17px; letter-spacing: .1px; }
.winbtns { margin-left: auto; display: flex; gap: 56px; margin-right: 19px; }
.wb { width: 14px; height: 14px; display: block; }

/* nav */
.navbar { height: 44px; flex: none; display: flex; align-items: center; border-bottom: 2px solid #2b2d2e; padding: 2px 0 0 13px; }
.crumbs { display: flex; align-items: center; }
.crumbs .ic { margin: 0 5px 0 9px; color: #3592c4; }
.crumbsep { width: 8px; height: 24px; margin: 0 12px 0 8px; flex: none; }
.crumbsep + .ic { margin-left: -8px; }
.navtools { margin-left: auto; display: flex; align-items: center; }
.user { width: 22px; height: 22px; }
.tiny { margin-left: 4px; color: #afb1b3; }
.sep.first { margin: 0 14px 0 12px; }
.cfg { width: 128px; height: 32px; background: none; border: 2px solid #5e6163; border-radius: 4px; color: #bbb; font: inherit; margin-right: 9px; padding: 0; white-space: nowrap; }
.btn.narrow { width: 39px; }
.gitlabel { margin: 0 6px 0 10px; }
.toolbox { width: 24px; height: 26px; flex: none; margin-left: 9px; }

.main { height: 820px; flex: none; display: flex; }

/* stripes */
.stripe { width: 28px; flex: none; display: flex; flex-direction: column; background: #3c3f41; border-right: 1px solid #323436; }
.stripe.right { width: 23px; border-right: 0; border-left: 1px solid #323436; overflow: hidden; }
.sitem { writing-mode: vertical-rl; display: flex; align-items: center; flex: none; font-size: 14.500px; color: #afb1b3; }
.stext { text-orientation: sideways; letter-spacing: -2.500px; white-space: nowrap; }
.stext.kanji { letter-spacing: 0; }
.sic { width: 16px; height: 16px; flex: none; color: #afb1b3; writing-mode: horizontal-tb; }
.stripe.left .sitem { transform: rotate(180deg); }
.stripe.left .sic { transform: rotate(180deg); }
.sitem.active { background: #2d2e30; color: #d5d5d5; }
.proj { height: 126px; padding-top: 18px; gap: 7.500px; }
.pr { margin-top: 12px; padding: 5px 0; gap: 6.500px; }
.struct { margin-top: auto; padding: 5px 0; gap: 10px; }
.marks { margin-top: 20px; margin-bottom: 15px; padding: 5px 0; gap: 5px; }
.stripe.right .sitem { padding-left: 6px; }
.notif { height: 82px; padding-top: 16px; gap: 5px; }
.dbs { height: 128px; padding-top: 20px; gap: 8px; }
.mk { margin-top: auto; margin-bottom: 12px; gap: 8px; font-size: 15px; }

/* center */
.center { flex: 1; min-width: 0; display: flex; flex-direction: column; }
.top { height: 337px; flex: none; display: flex; border-bottom: 3px solid #2d2e30; }
.project { width: 240px; flex: none; position: relative; overflow: hidden; }
.phead { height: 40px; display: flex; align-items: center; }
.selin { width: 34px; margin-left: 17px; display: flex; }
.selin .ic { width: 16px; height: 16px; margin-left: 3px; }
.phead .btn:nth-of-type(2) { margin-left: -13px; }
.ptree { padding-top: 1px; }
.frow { height: 30.100px; display: flex; align-items: center; white-space: nowrap; }
.frow.sel { background: #0d293e; padding-left: 9px; margin-top: -1px; padding-top: 1px; height: 31px; }
.frow.sel b { margin-left: 5px; font-weight: 600; color: #d4d6d8; letter-spacing: -.3px; }
.frow.file { padding-left: 64px; }
.frow.file .ic { width: 22px; height: 22px; }
.frow.file > span { margin-left: 6px; }
.badgetext { font: bold 6.500px "Liberation Sans", sans-serif; fill: #0e3c55; }
.frow.ext { padding-left: 9px; }
.frow.ext > span { margin-left: 6px; }
.chev { width: 16px; height: 16px; flex: none; color: #9c9fa1; display: block; }
.chev.none { visibility: hidden; }
.fold { margin-left: 13px; width: 22px; height: 20px; }
.gear { width: 20px; }
.teal { color: #3a8fb5; }
.vthumb { position: absolute; background: #5a5d5f; display: block; }
.pthumb { left: 227px; top: 40px; width: 13px; height: 244px; background: rgba(128,128,128,.38); }
.hthumb { position: absolute; left: 2px; top: 321px; width: 60px; height: 13px; background: rgba(120,120,120,.55); display: block; }

.editor { width: 982px; flex: none; display: flex; flex-direction: column; position: relative; border-left: 1px solid #333537; }
.tabs { height: 40px; display: flex; align-items: stretch; flex: none; border-bottom: 1px solid #303234; }
.tab { display: flex; align-items: center; padding: 1px 8px 0 14px; gap: 8px; }
.tab em, .rtab em { color: #6c6f71; font-size: 22px; line-height: 1; margin-left: 3px; }
.tab .ic { color: #3592c4; }
.tab:first-child { width: 116px; }
.tab.on { background: #4e5254; width: 138px; box-shadow: inset 0 -4px 0 #4a88c7; }
.dots { margin-left: auto; align-self: center; margin-right: 7px; }
.etool { height: 46px; flex: none; display: flex; align-items: center; padding-left: 5px; font-size: 15px; }
.combo { display: flex; align-items: center; white-space: nowrap; flex: none; }
.chv { width: 16px; height: 16px; color: #7f8284; margin-left: 3px; flex: none; }
.tx { margin-left: 16px; margin-right: 10px; }
.play { margin-left: 16px; margin-right: 12px; letter-spacing: -.35px; }
.schema { margin-left: 102px; width: 180px; }
.schema .ic { margin-right: 4px; }
.cons { margin-left: 0; }
.plug { position: relative; margin-right: 5px; display: block; }
.gdot { position: absolute; right: -2px; bottom: -2px; width: 7px; height: 7px; display: block; }
.pcirc { color: #5a5d5f; }
.ptext { font: 11px "Open Sans", sans-serif; fill: #4a4c4e; }
.ebody { height: 213px; flex: none; display: flex; background: #2b2b2b; }
.gutter { width: 75px; flex: none; background: #313335; border-right: 1px solid #555759; }
.gline { height: 33px; background: #323232; padding-left: 11px; color: #9da0a2; font: 16px/37px "DejaVu Sans", sans-serif; }
.code { flex: 1; }
.caretrow { height: 33px; background: #323232; display: flex; justify-content: flex-end; }
.okmark { color: #499c54; margin: 11px 10px 0 0; width: 18px; height: 18px; }
.eband { flex: 1; background: #333436; border-top: 1px solid #3d3f41; }
.ibeam { position: absolute; left: 268px; top: 168px; width: 8px; height: 18px; }

.dbpanel { flex: 1; min-width: 0; position: relative; display: flex; flex-direction: column; border-left: 1px solid #333537; overflow: hidden; }
.dhead, .shead { height: 40px; flex: none; display: flex; align-items: center; }
.ptitle { padding-left: 8px; }
.ptitle .k { font-size: 15.500px; }
.dtool { height: 42px; flex: none; display: flex; align-items: center; padding: 3px 0 0 3px; border-bottom: 2px solid #323436; }
.corner::after { content: ""; position: absolute; right: 5px; bottom: 7px; border: 4px solid transparent; border-top-color: #d0d0d0; border-bottom: 0; }
.qlbtn { position: relative; }
.qltext { position: absolute; left: 12px; top: 14px; font: bold 9px "Liberation Sans", sans-serif; color: #afb1b3; }
.dtree { flex: 1; overflow: hidden; padding-top: 3px; }
.trow { height: 30px; display: flex; align-items: center; white-space: nowrap; }
.trow.sel { background: #0d293e; }
.d0 { padding-left: 8px; }
.d1 { padding-left: 35px; }
.d2 { padding-left: 62px; }
.d3 { padding-left: 89px; }
.d4 { padding-left: 116px; }
.tic { position: relative; width: 22px; height: 22px; margin-left: 14px; margin-right: 9px; display: flex; align-items: center; justify-content: center; flex: none; }
.tic .ic { width: 22px; height: 22px; }
.dtree .chev { margin-left: 1px; }
.dtree .tic { margin-left: 13px; }
.badge { margin-left: 10px; height: 25px; line-height: 23px; padding: 0 2px; border: 1px solid #505356; border-radius: 4px; color: #6f7274; font-size: 14.500px; letter-spacing: .6px; }
.count { margin-left: 11px; color: #6f7274; font-size: 14.500px; }
.dthumb { left: 500px; top: 85px; width: 12px; height: 78px; }

/* services */
.services { flex: 1; min-height: 0; display: flex; flex-direction: column; }
.shead { height: 38px; }
.sbody { flex: 1; min-height: 0; display: flex; }
.stool { width: 43px; flex: none; border-right: 1px solid #323436; display: flex; flex-direction: column; align-items: center; }
.vbtn { height: 39px; width: 39px; flex: none; display: flex; align-items: center; justify-content: center; color: #afb1b3; position: relative; }
.vbtn.dim { color: #5c5f61; }
.vbtn .ic { color: inherit; }
.txb { font-size: 17px; height: 43px; }
.tc { position: absolute; right: 4px; bottom: 4px; width: 9px; height: 9px; color: #d0d0d0; }
.hsep { width: 30px; height: 1px; background: #515658; margin: 5px 0; display: block; flex: none; }
.stree { width: 119px; flex: none; position: relative; overflow: hidden; border-right: 1px solid #323436; }
.sttool { height: 43px; display: flex; align-items: center; padding-left: 1px; border-bottom: 1px solid #303234; }
.sttool .sep { margin: 0 4px 0 5px; }
.more { color: #afb1b3; margin-left: 14px; font-size: 17px; line-height: 1; }
.sttree { padding-top: 1px; }
.sttree .chev { margin-left: 2px; }
.sttree .trow .tic { margin-left: 12px; margin-right: 4px; }
.sttree .sel { position: relative; }
.treescroll { position: absolute; left: 2px; bottom: 2px; width: 56px; height: 12px; background: #5a5d5f; display: block; }
.results { flex: 1; min-width: 0; display: flex; flex-direction: column; }
.rtabs { height: 43px; flex: none; display: flex; font-size: 15px; }
.rtab { display: flex; align-items: center; gap: 8px; padding: 1px 0 0 21px; }
.rtab:first-child { width: 94px; }
.rtab.on { width: 146px; box-shadow: inset 0 -3px 0 #6b6f72; }
.rtab em { margin-left: 3px; }
.rtool { height: 43px; flex: none; display: flex; align-items: center; padding: 2px 0 0 2px; font-size: 15px; border-bottom: 2px solid #323436; }
.rows { width: 61px; justify-content: center; }
.rows .chv { margin-left: 3px; }
.csv { margin-right: 11px; }
.gridwrap { flex: 1; min-height: 0; display: flex; flex-direction: column; background: #2b2b2b; }
.gridarea { flex: 1; display: flex; min-height: 0; justify-content: space-between; }
.rowhead { width: 37px; flex: none; background: #313335; height: 71px; }
.rh0 { height: 36px; border-bottom: 1px solid #3f4143; }
.rh1 { height: 35px; text-align: center; font: 16px/38px "DejaVu Sans", sans-serif; color: #a0a3a5; }
.vtrack { width: 15px; background: #3c3f41; padding-top: 40px; padding-left: 2px; }
.vthumb2 { display: block; width: 12px; height: 197px; background: #5a5f61; }
.htrack { height: 15px; flex: none; background: #3c3f41; padding-left: 39px; }
.hthumb2 { display: block; height: 13px; width: 1503px; background: #5a5f61; }

/* bottom */
.toolbar { height: 33px; flex: none; display: flex; align-items: stretch; border-top: 2px solid #2d2e30; border-bottom: 1px solid #4a4d4f; padding: 0 0 0 30px; font-size: 15px; }
.toolbar .k { font-size: 14px; letter-spacing: -2.600px; }
.tw { display: flex; align-items: center; gap: 6px; padding: 2px 9px 0; white-space: nowrap; }
.tw .ic { width: 18px; height: 18px; }
.tw:nth-child(1) { gap: 10px; }
.tw:nth-child(2) { margin-left: 11px; gap: 3px; }
.tw:nth-child(3) { margin-left: 12px; gap: 10px; }
.tw:nth-child(4) { margin-left: 11px; }
.tw:nth-child(5) { margin-left: 3px; padding: 2px 17px 0; background: #2d2e30; color: #e6e6e6; width: 100px; }
.tw:nth-child(6) { margin-left: 12px; }
.tw:nth-child(7) { margin-left: 19px; }
.status { height: 28px; flex: none; display: flex; align-items: center; padding: 2px 0 0 4px; }
.frame { width: 19px; height: 19px; }
.stat { margin-left: auto; display: flex; align-items: center; gap: 19px; padding-right: 4px; }
.gb { display: flex; align-items: center; gap: 4px; margin-left: 1px; }
.lockic { margin: 0 -3.500px; }
.stat .wide { width: 24px; height: 24px; }
```
